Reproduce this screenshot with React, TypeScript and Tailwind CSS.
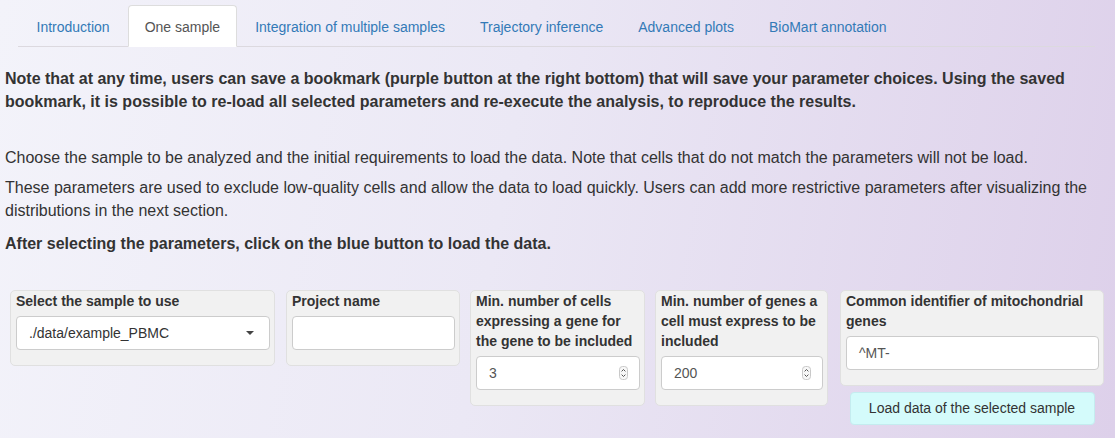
import React from 'react';

const tabs = [
  'Introduction',
  'One sample',
  'Integration of multiple samples',
  'Trajectory inference',
  'Advanced plots',
  'BioMart annotation',
];

function Spinner() {
  return (
    <svg width="9" height="14" viewBox="0 0 9 14" className="shrink-0">
      <rect x="0.5" y="0.5" width="8" height="13" rx="3" fill="#f7f7f7" stroke="#c9c9c9" />
      <path d="M2.6 5.4 L4.5 3.5 L6.4 5.4" fill="none" stroke="#555" strokeWidth="1" />
      <path d="M2.6 8.6 L4.5 10.5 L6.4 8.6" fill="none" stroke="#555" strokeWidth="1" />
    </svg>
  );
}

function Well({ width, label, children }: { width: string; label: React.ReactNode; children: React.ReactNode }) {
  return (
    <div className={`${width} bg-[#f1f1f1] border border-[#e0e0e0] rounded-[5px] pl-[5px] pr-[4px] pb-[15px]`}>
      <div className="text-[14px] leading-[20px] font-bold text-[#333] mb-[5px]">{label}</div>
      {children}
    </div>
  );
}

export default function App() {
  return (
    <div
      className="h-[438px] overflow-hidden bg-[linear-gradient(100deg,#f3f3fa_0%,#ebe8f5_45%,#ddd0ea_100%)] text-[#333]"
      style={{ fontFamily: '"Liberation Sans", Arial, sans-serif' }}
    >
      {/* Tabs */}
      <div className="pt-[5px] ml-[18px] mr-[20px] flex border-b border-[#dcd9df]">
        {tabs.map((t, i) => (
          <div
            key={t}
            className={`mr-[2px] -mb-px px-[15.5px] pt-[11px] pb-[9px] text-[14px] leading-[20px] border rounded-t-[4px] ${
              i === 1
                ? 'bg-white text-[#555] border-[#dddddd] border-b-white'
                : 'text-[#337ab7] border-transparent'
            } ${i === 0 ? 'ml-[2px]' : ''}`}
          >
            {t}
          </div>
        ))}
      </div>

      <div className="px-[5px] text-[16px] leading-[23px]">
        <p className="font-bold mt-[20px]">
          Note that at any time, users can save a bookmark (purple button at the right bottom) that will save your
          parameter choices. Using the saved bookmark, it is possible to re-load all selected parameters and re-execute
          the analysis, to reproduce the results.
        </p>
        <p className="mt-[33px]">
          Choose the sample to be analyzed and the initial requirements to load the data. Note that cells that do not
          match the parameters will not be load.
        </p>
        <p className="mt-[7px]">
          These parameters are used to exclude low-quality cells and allow the data to load quickly. Users can add more
          restrictive parameters after visualizing the distributions in the next section.
        </p>
        <p className="mt-[10px] font-bold">After selecting the parameters, click on the blue button to load the data.</p>
      </div>

      {/* Parameter wells */}
      <div className="flex items-start mt-[35px] pl-[10px]">
        <Well width="w-[265px]" label="Select the sample to use">
          <div className="h-[34px] bg-white border border-[#cccccc] rounded-[4px] flex items-center justify-between pl-[12px] pr-[15px] text-[14px] text-[#333]">
            <span>./data/example_PBMC</span>
            <svg width="8" height="4" viewBox="0 0 8 4">
              <path d="M0 0 L8 0 L4 4 Z" fill="#444" />
            </svg>
          </div>
        </Well>

        <div className="ml-[11px]">
          <Well width="w-[174px]" label="Project name">
            <div className="h-[34px] bg-white border border-[#cccccc] rounded-[4px]" />
          </Well>
        </div>

        <div className="ml-[10px]">
          <Well
            width="w-[175px]"
            label={
              <>
                Min. number of cells
                <br />
                expressing a gene for
                <br />
                the gene to be included
              </>
            }
          >
            <div className="h-[34px] bg-white border border-[#cccccc] rounded-[4px] flex items-center justify-between pl-[12px] pr-[11px] text-[14px] text-[#555]">
              <span>3</span>
              <Spinner />
            </div>
          </Well>
        </div>

        <div className="ml-[10px]">
          <Well
            width="w-[173px]"
            label={
              <>
                Min. number of genes a
                <br />
                cell must express to be
                <br />
                included
              </>
            }
          >
            <div className="h-[34px] bg-white border border-[#cccccc] rounded-[4px] flex items-center justify-between pl-[12px] pr-[11px] text-[14px] text-[#555]">
              <span>200</span>
              <Spinner />
            </div>
          </Well>
        </div>

        <div className="ml-[12px] w-[264px] flex flex-col items-center">
          <Well
            width="w-[264px]"
            label={
              <>
                Common identifier of mitochondrial
                <br />
                genes
              </>
            }
          >
            <div className="h-[34px] bg-white border border-[#cccccc] rounded-[4px] flex items-center pl-[12px] text-[14px] text-[#555]">
              ^MT-
            </div>
          </Well>
          <button className="mt-[6px] w-[245px] h-[33px] bg-[#d4fbfb] border border-[#c4ecef] rounded-[4px] text-[14px] text-[#333]">
            Load data of the selected sample
          </button>
        </div>
      </div>
    </div>
  );
}
